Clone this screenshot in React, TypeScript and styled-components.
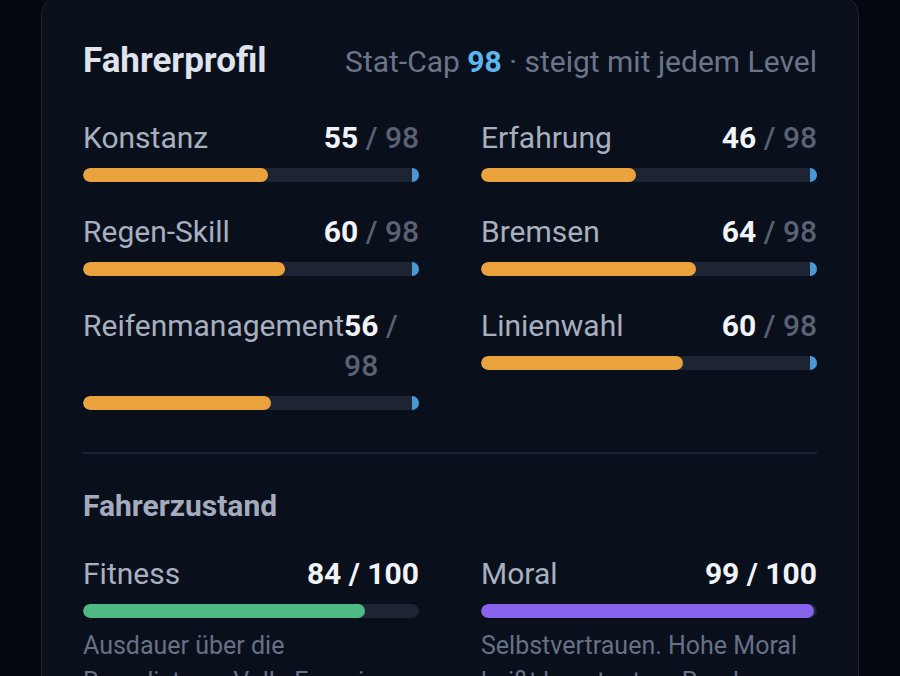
import type { FC } from 'react'
import styled, { createGlobalStyle } from 'styled-components'

const GlobalStyle = createGlobalStyle`
  html,
  body {
    background-color: #04070f;
    margin: 0;
    padding: 0;
  }

  body {
    font-family: Roboto, 'Noto Sans', Arial, sans-serif;
    -webkit-font-smoothing: antialiased;
  }
`

const Page = styled.div`
  padding: 0 41px;
`

const Card = styled.section`
  background-color: #0a0f1c;
  border: 1px solid #1e2432;
  border-radius: 22px;
  box-sizing: border-box;
  margin-top: -6px;
  padding: 46px 41px 40px;
`

const Header = styled.header`
  align-items: baseline;
  display: flex;
  justify-content: space-between;
  margin-bottom: 36px;
`

const Title = styled.h1`
  color: #dfe3ec;
  font-size: 35px;
  font-weight: 700;
  line-height: 40px;
  margin: 0;
`

const Subtitle = styled.p`
  color: #6b7488;
  font-size: 30px;
  line-height: 40px;
  margin: 0;

  strong {
    color: #5cb6f0;
    font-weight: 700;
  }
`

const Grid = styled.div<{ $rowGap: number }>`
  column-gap: 62px;
  display: grid;
  grid-template-columns: 1fr 1fr;
  row-gap: ${({ $rowGap }) => $rowGap}px;
`

const Stat = styled.div`
  display: flex;
  flex-direction: column;
  min-width: 0;
`

const StatHead = styled.div`
  align-items: flex-start;
  display: flex;
  justify-content: space-between;
  line-height: 40px;
  margin-bottom: 10px;
`

const Label = styled.span`
  color: #a8afbf;
  font-size: 30px;
`

const Value = styled.span`
  color: #f1f3f7;
  font-size: 30px;
  font-weight: 700;

  small {
    color: #596173;
    font-size: inherit;
    font-weight: 500;
  }
`

const Track = styled.div`
  background-color: #1d2433;
  border-radius: 7px;
  height: 14px;
  overflow: hidden;
  position: relative;
`

const Fill = styled.div<{ $color: string }>`
  background-color: ${({ $color }) => $color};
  border-radius: 7px;
  height: 100%;
`

const CapMarker = styled.span`
  background-color: #4a97d4;
  height: 100%;
  position: absolute;
  top: 0;
  width: 8px;
`

const Divider = styled.hr`
  border: 0;
  border-top: 2px solid #1b2232;
  margin: 42px 0 34px;
`

const SectionTitle = styled.h2`
  color: #a3abbd;
  font-size: 30px;
  font-weight: 700;
  line-height: 36px;
  margin: 0 0 30px;
`

const Description = styled.p`
  color: #677084;
  font-size: 25px;
  line-height: 36px;
  margin: 10px 0 0;
`

const CAP = 98

const stats = [
  { label: 'Konstanz', value: 55 },
  { label: 'Erfahrung', value: 46 },
  { label: 'Regen-Skill', value: 60 },
  { label: 'Bremsen', value: 64 },
  { label: 'Reifenmanagement', value: 56 },
  { label: 'Linienwahl', value: 60 },
]

const condition = [
  {
    label: 'Fitness',
    value: 84,
    color: '#4fb985',
    text: 'Ausdauer über die Renndistanz. Volle Energie macht dich schneller.',
  },
  {
    label: 'Moral',
    value: 99,
    color: '#8762ea',
    text: 'Selbstvertrauen. Hohe Moral heißt konstantere Runden.',
  },
]

const App: FC = () => {
  return (
    <>
      <GlobalStyle />
      <Page>
        <Card>
          <Header>
            <Title>Fahrerprofil</Title>
            <Subtitle>
              Stat-Cap <strong>{CAP}</strong> · steigt mit jedem Level
            </Subtitle>
          </Header>

          <Grid $rowGap={30}>
            {stats.map(({ label, value }) => (
              <Stat key={label}>
                <StatHead>
                  <Label>{label}</Label>
                  <Value>
                    {value} <small>/ {CAP}</small>
                  </Value>
                </StatHead>
                <Track>
                  <Fill
                    $color="#eaa23d"
                    style={{ width: `${value}%` }}
                  />
                  <CapMarker style={{ left: `${CAP}%` }} />
                </Track>
              </Stat>
            ))}
          </Grid>

          <Divider />

          <SectionTitle>Fahrerzustand</SectionTitle>

          <Grid $rowGap={30}>
            {condition.map(({ label, value, color, text }) => (
              <Stat key={label}>
                <StatHead>
                  <Label>{label}</Label>
                  <Value>
                    {value} / 100
                  </Value>
                </StatHead>
                <Track>
                  <Fill
                    $color={color}
                    style={{ width: `${value}%` }}
                  />
                </Track>
                <Description>{text}</Description>
              </Stat>
            ))}
          </Grid>
        </Card>
      </Page>
    </>
  )
}

export default App
